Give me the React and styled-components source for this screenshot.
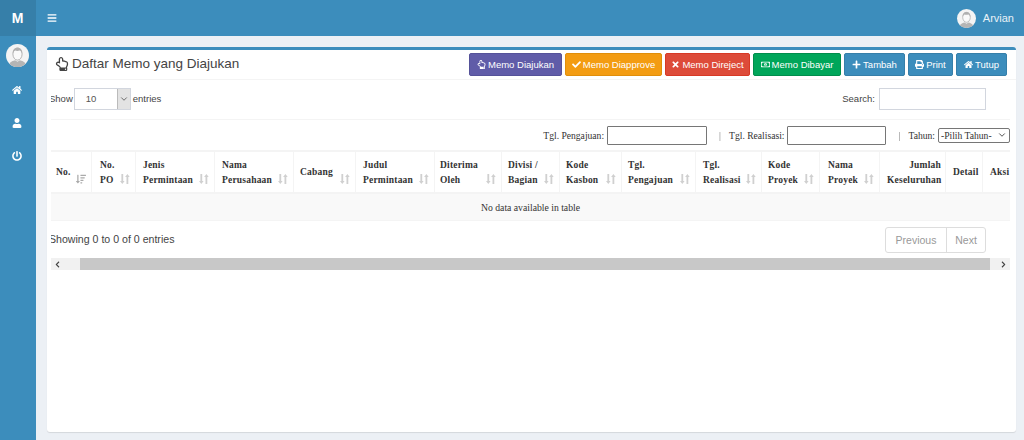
import React from 'react'
import styled, { createGlobalStyle } from 'styled-components'
import { FaBars, FaHome, FaUser, FaPowerOff, FaRegHandPointUp, FaCheck, FaTimes, FaRegMoneyBillAlt, FaPlus, FaPrint, FaSortAmountDown, FaChevronLeft, FaChevronRight } from 'react-icons/fa'
import { FiChevronDown } from 'react-icons/fi'

const GlobalStyle = createGlobalStyle`
  html, body { margin: 0; padding: 0; height: 440px; overflow: hidden; background: #ecf0f5; }
  * { box-sizing: border-box; }
  body { font-family: "Liberation Sans", Arial, sans-serif; color: #333; }
`

const Page = styled.div`
  display: flex;
  flex-direction: column;
  width: 1024px;
  height: 440px;
`

const TopBar = styled.header`
  display: flex;
  align-items: center;
  height: 36px;
  background: #3c8dbc;
  color: #fff;
`

const Logo = styled.div`
  display: flex;
  align-items: center;
  justify-content: center;
  width: 36px;
  height: 36px;
  padding-right: 1px;
  background: #367fa9;
  font-size: 14px;
  font-weight: bold;
`

const MenuButton = styled.div`
  display: flex;
  margin-left: 11px;
  font-size: 10px;
`

const UserMenu = styled.div`
  display: flex;
  align-items: center;
  gap: 7px;
  margin-left: auto;
  margin-right: 10px;
  font-size: 11px;
  color: #e8f1f7;
`

const Body = styled.div`
  display: flex;
  flex: 1;
  min-height: 0;
`

const SideBar = styled.nav`
  display: flex;
  flex-direction: column;
  align-items: center;
  width: 36px;
  background: #3c8dbc;
  color: #fff;
  padding-top: 8px;
`

const SideItem = styled.div`
  display: flex;
  justify-content: center;
  align-items: center;
  height: 33px;
  font-size: 10px;
  padding-right: 2px;
`

const SideAvatar = styled.div`
  display: flex;
  margin-right: 2px;
  margin-bottom: 6px;
`

const Content = styled.main`
  flex: 1;
  padding: 11px 8px 8px 11px;
  min-width: 0;
`

const Box = styled.section`
  height: 100%;
  background: #fff;
  border-top: 3px solid #3c8dbc;
  border-radius: 3px;
  box-shadow: 0 1px 1px rgba(0, 0, 0, 0.1);
`

const BoxHeader = styled.div`
  display: flex;
  align-items: center;
  height: 30px;
  padding: 0 9px 0 8px;
  border-bottom: 1px solid #f4f4f4;
`

const BoxTitle = styled.h3`
  display: flex;
  align-items: center;
  gap: 3px;
  margin: 0 0 2px;
  font-size: 13.5px;
  font-weight: normal;
  color: #444;
  svg { font-size: 14px; }
`

const ButtonRow = styled.div`
  display: flex;
  gap: 3px;
  margin-left: auto;
`

const ActionButton = styled.div`
  display: flex;
  align-items: center;
  justify-content: center;
  gap: 2px;
  height: 23px;
  width: ${p => p.$w}px;
  background: ${p => p.$bg};
  border: 1px solid ${p => p.$border};
  border-radius: 2px;
  color: #fff;
  font-size: 9.5px;
  white-space: nowrap;
  svg { font-size: 9px; }
`

const Wrapper = styled.div`
  margin: 0 6px 0 4px;
  overflow: hidden;
`

const LengthRow = styled.div`
  display: flex;
  align-items: center;
  height: 40px;
  margin-left: -2px;
  padding: 0 24px 2px 0;
  font-size: 9.5px;
  color: #444;
  border-bottom: 1px solid #f4f4f4;
`

const FakeSelect = styled.div`
  display: flex;
  align-items: center;
  width: 57px;
  height: 22px;
  margin: 0 2px 0 1px;
  border: 1px solid #d2d6de;
  padding-left: 11px;
  font-size: 9.5px;
  color: #555;
`

const SelectArrow = styled.span`
  display: flex;
  align-items: center;
  justify-content: center;
  margin-left: auto;
  width: 13px;
  height: 100%;
  background: #e3e3e3;
  border-left: 1px solid #bbb;
  font-size: 10px;
  color: #555;
`

const SearchLabel = styled.span`
  margin-left: auto;
  margin-right: 4px;
`

const SearchInput = styled.div`
  width: 107px;
  height: 22px;
  border: 1px solid #d2d6de;
`

const FilterRow = styled.div`
  display: flex;
  align-items: center;
  justify-content: flex-end;
  height: 30px;
  font-family: "Liberation Serif", "Times New Roman", serif;
  font-size: 9.6px;
  color: #333;
`

const FilterInput = styled.div`
  width: ${p => p.$w}px;
  height: 19px;
  margin-left: 3px;
  background: #fff;
  border: 1px solid #767676;
  border-radius: 1px;
`

const Pipe = styled.span`
  width: 2px;
  margin: 0 8px 0 12px;
  color: #777;
  will-change: opacity;
`

const FilterSelect = styled.div`
  display: flex;
  align-items: center;
  justify-content: space-between;
  width: 72px;
  height: 15px;
  margin-left: 3px;
  padding: 0 2px 0 2px;
  border: 1px solid #767676;
  border-radius: 2px;
  svg { font-size: 10px; }
`

const Table = styled.table`
  width: 959px;
  table-layout: fixed;
  border-collapse: separate;
  border-spacing: 0;
  font-family: "Liberation Serif", "Times New Roman", serif;
  font-size: 9.7px;
  color: #333;
`

const Th = styled.th`
  position: relative;
  height: 44px;
  padding: 1px 4px 0 ${p => p.$pad || 7}px;
  border-top: 2px solid #f4f4f4;
  border-bottom: 2px solid #f4f4f4;
  border-right: 1px solid #f4f4f4;
  text-align: ${p => p.$right ? 'right' : 'left'};
  line-height: 14.5px;
  font-size: 9.5px;
  font-weight: bold;
  letter-spacing: 0.2px;
  &:last-child { border-right: none; }
`

const SortMark = styled.span`
  position: absolute;
  right: 5px;
  bottom: 8px;
  display: flex;
  font-size: 10px;
  color: ${p => p.$active ? '#aaa' : '#d0d0d0'};
`

const EmptyCell = styled.td`
  height: 27px;
  background: #f9f9f9;
  border-bottom: 1px solid #f4f4f4;
  text-align: center;
`

const FooterRow = styled.div`
  display: flex;
  align-items: center;
  justify-content: space-between;
  height: 37px;
  margin-left: -2px;
  padding-right: 24px;
  font-size: 10.6px;
  color: #444;
`

const FooterInfo = styled.span`
  padding-bottom: 2px;
`

const Pager = styled.div`
  display: flex;
  height: 26px;
  border: 1px solid #ddd;
  border-radius: 3px;
  font-size: 10.5px;
  color: #999;
`

const PagerItem = styled.span`
  display: flex;
  align-items: center;
  justify-content: center;
  width: ${p => p.$w}px;
  & + & { border-left: 1px solid #ddd; }
`

const ScrollTrack = styled.div`
  display: flex;
  height: 12px;
  background: #f1f1f1;
`

const ScrollEnd = styled.span`
  display: flex;
  align-items: center;
  justify-content: ${p => p.$end ? 'flex-end' : 'flex-start'};
  width: ${p => p.$w}px;
  padding: 0 3px;
  font-size: 7px;
  color: #404040;
`

const ScrollThumb = styled.div`
  flex: 1;
  background: #c8c8c8;
`

const Avatar = ({ size }) => (
  <svg width={size} height={size} viewBox="0 0 24 24">
    <circle cx="12" cy="12" r="12" fill="#f4f4f4" />
    <clipPath id={`av${size}`}><circle cx="12" cy="12" r="12" /></clipPath>
    <g clipPath={`url(#av${size})`}>
      <path d="M3 24c0-4.500 2.500-6 6.500-7l2.500 1.500 2.500-1.500c4 1 6.500 2.500 6.500 7z" fill="#b5b5b5" />
      <ellipse cx="12" cy="10.500" rx="4.800" ry="6.300" fill="#fafafa" stroke="#aaa" strokeWidth="0.900" />
      <path d="M7.200 10c-.4-4 1.600-6.200 4.800-6.200s5.200 2.200 4.800 6.200c-.8-2-1.500-2.800-2.500-3.200-1.500.6-3.500.6-4.800 0-1 .6-1.600 1.400-2.300 3.200z" fill="#b0b0b0" />
    </g>
  </svg>
)

const SortBoth = () => (
  <svg width="10" height="10" viewBox="0 0 10 10" fill="currentColor">
    <path d="M1.400 0h1.800v7H4.600L2.300 10 0 7h1.400z" />
    <path d="M8.300 10H6.500V3H5.100L7.400 0l2.300 3H8.300z" />
  </svg>
)

const columns = [
  { label: <>No.</>, sort: 'desc', pad: 5 },
  { label: <>No.<br />PO</>, pad: 8 },
  { label: <>Jenis<br />Permintaan</> },
  { label: <>Nama<br />Perusahaan</> },
  { label: <>Cabang</>, pad: 6 },
  { label: <>Judul<br />Permintaan</> },
  { label: <>Diterima<br />Oleh</>, pad: 5 },
  { label: <>Divisi /<br />Bagian</>, pad: 6 },
  { label: <>Kode<br />Kasbon</>, pad: 6 },
  { label: <>Tgl.<br />Pengajuan</>, pad: 6 },
  { label: <>Tgl.<br />Realisasi</>, pad: 7 },
  { label: <>Kode<br />Proyek</>, pad: 6 },
  { label: <>Nama<br />Proyek</>, pad: 8 },
  { label: <>Jumlah<br />Keseluruhan</>, right: true, plain: true },
  { label: <>Detail</>, plain: true, pad: 7 },
  { label: <>Aksi</>, plain: true, pad: 7 }
]

const widths = [41, 44, 79, 79, 62, 79, 67, 58, 62, 74, 66, 58, 60, 66, 37, 27]

const buttons = [
  { text: 'Memo Diajukan', icon: <FaRegHandPointUp />, bg: '#605ca8', border: '#555299', w: 93 },
  { text: 'Memo Diapprove', icon: <FaCheck />, bg: '#f39c12', border: '#e08e0b', w: 97 },
  { text: 'Memo Direject', icon: <FaTimes />, bg: '#dd4b39', border: '#d73925', w: 85 },
  { text: 'Memo Dibayar', icon: <FaRegMoneyBillAlt />, bg: '#00a65a', border: '#008d4c', w: 88 },
  { text: 'Tambah', icon: <FaPlus />, bg: '#3c8dbc', border: '#367fa9', w: 61 },
  { text: 'Print', icon: <FaPrint />, bg: '#3c8dbc', border: '#367fa9', w: 45 },
  { text: 'Tutup', icon: <FaHome />, bg: '#3c8dbc', border: '#367fa9', w: 51 }
]

export default function App() {
  return (
    <Page>
      <GlobalStyle />
      <TopBar>
        <Logo>M</Logo>
        <MenuButton><FaBars /></MenuButton>
        <UserMenu><Avatar size={19} />Arvian</UserMenu>
      </TopBar>
      <Body>
        <SideBar>
          <SideAvatar><Avatar size={23} /></SideAvatar>
          <SideItem><FaHome /></SideItem>
          <SideItem><FaUser /></SideItem>
          <SideItem><FaPowerOff /></SideItem>
        </SideBar>
        <Content>
          <Box>
            <BoxHeader>
              <BoxTitle><FaRegHandPointUp />Daftar Memo yang Diajukan</BoxTitle>
              <ButtonRow>
                {buttons.map(b => (
                  <ActionButton key={b.text} $bg={b.bg} $border={b.border} $w={b.w}>{b.icon}{b.text}</ActionButton>
                ))}
              </ButtonRow>
            </BoxHeader>
            <Wrapper>
              <LengthRow>
                Show
                <FakeSelect>10<SelectArrow><FiChevronDown /></SelectArrow></FakeSelect>
                entries
                <SearchLabel>Search:</SearchLabel>
                <SearchInput />
              </LengthRow>
              <FilterRow>
                Tgl. Pengajuan:<FilterInput $w={100} />
                <Pipe>|</Pipe>
                Tgl. Realisasi:<FilterInput $w={99} />
                <Pipe>|</Pipe>
                Tahun:<FilterSelect>-Pilih Tahun-<FiChevronDown /></FilterSelect>
              </FilterRow>
              <Table>
                <colgroup>
                  {widths.map((w, i) => <col key={i} style={{ width: w }} />)}
                </colgroup>
                <thead>
                  <tr>
                    {columns.map((c, i) => (
                      <Th key={i} $pad={c.pad} $right={c.right}>
                        {c.label}
                        {!c.plain && <SortMark $active={!!c.sort}>{c.sort ? <FaSortAmountDown /> : <SortBoth />}</SortMark>}
                      </Th>
                    ))}
                  </tr>
                </thead>
                <tbody>
                  <tr><EmptyCell colSpan={16}>No data available in table</EmptyCell></tr>
                </tbody>
              </Table>
              <FooterRow>
                <FooterInfo>Showing 0 to 0 of 0 entries</FooterInfo>
                <Pager>
                  <PagerItem $w={60}>Previous</PagerItem>
                  <PagerItem $w={39}>Next</PagerItem>
                </Pager>
              </FooterRow>
              <ScrollTrack>
                <ScrollEnd $w={29}><FaChevronLeft /></ScrollEnd>
                <ScrollThumb />
                <ScrollEnd $w={20} $end><FaChevronRight /></ScrollEnd>
              </ScrollTrack>
            </Wrapper>
          </Box>
        </Content>
      </Body>
    </Page>
  )
}
